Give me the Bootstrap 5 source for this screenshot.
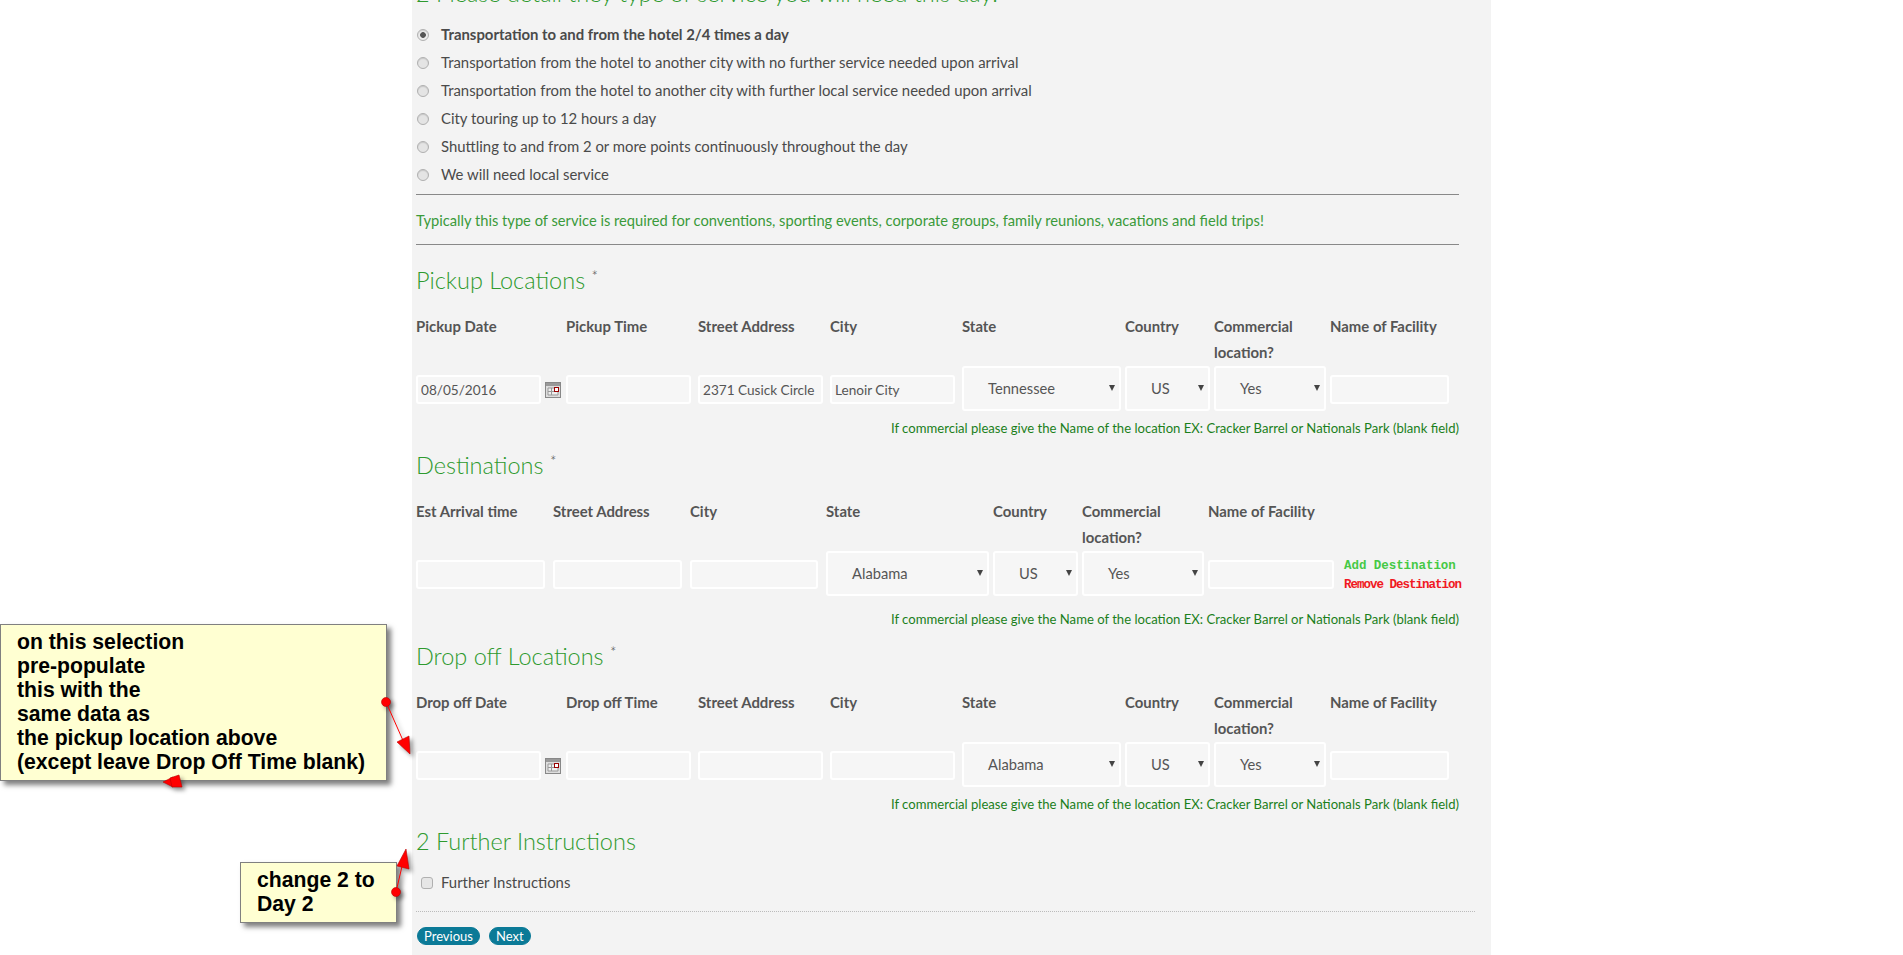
<!DOCTYPE html>
<html lang="en">

<head>
    <meta charset="UTF-8">
    <title>Day 2 Service Details</title>
    <link href="https://cdn.jsdelivr.net/npm/bootstrap@5.3.0/dist/css/bootstrap.min.css" rel="stylesheet">
    <style>
        html, body {
            height: 955px;
            overflow: hidden;
        }

        body {
            background-color: #fff;
            color: #4a4a4a;
            font-family: 'Lato', 'Liberation Sans', sans-serif;
            font-size: 14.9px;
            position: relative;
        }

        .form-panel {
            width: 1079px;
            height: 955px;
            margin-left: 412px;
            padding-left: 4px;
            background-color: #f3f3f3;
            overflow: hidden;
        }

        .sec-title {
            color: #2e9a2e;
            font-family: 'Lato', sans-serif;
            font-weight: 300;
            font-size: 23.5px;
            line-height: 30px;
            margin: 13px 0 19px;
        }

        .sec-title sup {
            color: #444;
            font-size: 15px;
        }

        .top-title {
            margin: -22px 0 12px;
        }

        .pickup-title {
            margin-top: 20px;
        }

        .further-title {
            margin-bottom: 14px;
        }

        .radio-row {
            height: 28px;
            display: flex;
            align-items: center;
            gap: 12px;
        }

        .radio-dot {
            appearance: none;
            flex: none;
            width: 12px;
            height: 12px;
            margin: 2px 0 0 1px;
            border: 1px solid #b0b0b0;
            border-radius: 50%;
            background-color: #e4e4e4;
            box-shadow: inset 0 1px 1px rgba(0, 0, 0, .12);
        }

        .radio-dot:checked {
            background: radial-gradient(circle, #555 0, #555 2.5px, #ececec 3.2px);
        }

        .panel-rule {
            width: 1043px;
            border: 0;
            border-top: 1px solid #888;
            opacity: 1;
            margin: 0;
        }

        .first-rule {
            margin-top: 6px;
        }

        .green-note {
            color: #3a9a3a;
            height: 49px;
            line-height: 50px;
            font-size: 14.7px;
        }

        .loc-grid {
            display: grid;
            align-items: center;
            width: 1043px;
        }

        .cols-a {
            grid-template-columns: 150px 132px 132px 132px 163px 89px 116px 129px;
        }

        .cols-b {
            grid-template-columns: 137px 137px 136px 167px 89px 126px 136px 116px;
        }

        .field-label {
            color: #555;
            font-weight: 700;
            align-self: start;
            line-height: 26px;
            height: 53px;
            margin-top: -1px;
        }

        .field-cell {
            display: flex;
            align-items: center;
            gap: 4px;
            padding-top: 2px;
        }

        .text-box {
            height: 29px;
            width: 100%;
            min-width: 0;
            padding: 2px 3px;
            background-color: #f6f6f6;
            border: 2px solid #fff;
            border-radius: 3px;
            color: #555;
            font-size: 13.6px;
        }

        .date-box {
            width: 125px;
            flex: none;
        }

        .cols-a .field-cell {
            padding-right: 7px;
        }

        .cols-a .date-cell {
            padding-right: 0;
        }

        .cols-a .name-cell, .cols-b .name-cell {
            padding-right: 10px;
        }

        .select-box {
            height: 45px;
            padding: 0 18px 0 24px;
            background-color: #f6f6f6;
            border: 2px solid #fff;
            border-radius: 3px;
            color: #555;
            font-size: 14.7px;
            display: flex;
            align-items: center;
            position: relative;
        }

        .select-box::after {
            content: "";
            position: absolute;
            right: 4px;
            top: 17px;
            border-left: 3px solid transparent;
            border-right: 3px solid transparent;
            border-top: 6px solid #444;
        }

        .cal-icon {
            width: 16px;
            height: 16px;
            flex: none;
        }

        .help-line {
            width: 1043px;
            color: #1b7f1b;
            font-size: 13.1px;
            text-align: right;
            line-height: 18px;
            margin-top: 8px;
        }

        .help-wide {
            margin-top: 14px;
        }

        .dest-links {
            font-family: 'Liberation Mono', monospace;
            font-size: 12.5px;
            font-weight: 700;
            line-height: 19px;
            padding-top: 4px;
            white-space: nowrap;
        }

        .add-link {
            color: #45c945;
            letter-spacing: -.05px;
        }

        .remove-link {
            color: #f01822;
            letter-spacing: -1px;
        }

        .check-row {
            display: flex;
            align-items: center;
            gap: 8px;
            padding-left: 5px;
            height: 24px;
        }

        .check-box {
            appearance: none;
            flex: none;
            width: 12px;
            height: 12px;
            margin: 2px 0 0;
            border: 1px solid #b0b0b0;
            border-radius: 3px;
            background-color: #e6e6e6;
        }

        .dotted-rule {
            width: 1059px;
            border-top: 1px dotted #bbb;
            margin: 17px 0 15px;
        }

        .step-row {
            gap: 9px;
            padding-left: 1px;
        }

        .step-btn {
            --bs-btn-bg: #0b7a97;
            --bs-btn-color: #fff;
            --bs-btn-hover-bg: #0b7a97;
            --bs-btn-hover-color: #fff;
            --bs-btn-border-color: #0b7a97;
            --bs-btn-padding-x: 6px;
            --bs-btn-padding-y: 0;
            --bs-btn-font-size: 13px;
            --bs-btn-border-radius: 9px;
            --bs-btn-line-height: 16px;
        }

        .note-box {
            position: absolute;
            background-color: #ffffd2;
            border: 1px solid #808080;
            box-shadow: 4px 4px 5px rgba(0, 0, 0, .5);
            color: #000;
            font-family: 'Liberation Sans', Arial, sans-serif;
            font-weight: 700;
            font-size: 21.2px;
            line-height: 24px;
            padding: 5px 0 0 16px;
        }

        .note-select {
            left: 0;
            top: 624px;
            width: 387px;
            height: 157px;
        }

        .note-day {
            left: 240px;
            top: 862px;
            width: 157px;
            height: 61px;
        }

        .arrow-layer {
            position: absolute;
            left: 0;
            top: 0;
            pointer-events: none;
        }

        .arrow-shapes {
            filter: drop-shadow(3px 3px 2px rgba(0, 0, 0, .4));
        }
    </style>
</head>

<body>
    <main class="form-panel">
        <h4 class="sec-title top-title">2 Please detail they type of service you will need this day:</h4>

        <!-- Service type -->
        <div class="radio-row fw-bold"><input class="radio-dot" type="radio" name="svc" checked><span>Transportation to and from the hotel 2/4 times a day</span></div>
        <div class="radio-row"><input class="radio-dot" type="radio" name="svc"><span>Transportation from the hotel to another city with no further service needed upon arrival</span></div>
        <div class="radio-row"><input class="radio-dot" type="radio" name="svc"><span>Transportation from the hotel to another city with further local service needed upon arrival</span></div>
        <div class="radio-row"><input class="radio-dot" type="radio" name="svc"><span>City touring up to 12 hours a day</span></div>
        <div class="radio-row"><input class="radio-dot" type="radio" name="svc"><span>Shuttling to and from 2 or more points continuously throughout the day</span></div>
        <div class="radio-row"><input class="radio-dot" type="radio" name="svc"><span>We will need local service</span></div>
        <hr class="panel-rule first-rule">
        <div class="green-note">Typically this type of service is required for conventions, sporting events, corporate groups, family reunions, vacations and field trips!</div>
        <hr class="panel-rule">

        <!-- Pickup -->
        <h4 class="sec-title pickup-title">Pickup Locations <sup>*</sup></h4>
        <div class="loc-grid cols-a">
            <div class="field-label">Pickup Date</div>
            <div class="field-label">Pickup Time</div>
            <div class="field-label">Street Address</div>
            <div class="field-label">City</div>
            <div class="field-label">State</div>
            <div class="field-label">Country</div>
            <div class="field-label">Commercial location?</div>
            <div class="field-label">Name of Facility</div>
            <div class="field-cell date-cell">
                <input class="text-box date-box" type="text" value="08/05/2016">
                <svg class="cal-icon" viewBox="0 0 16 16"><rect x=".5" y=".5" width="15" height="15" fill="#ddd" stroke="#888"/><rect x="1" y="1" width="14" height="3" fill="#999"/><path d="M3 6h10v7H3zM6.500 6v7M3 9.500h10" fill="#eee" stroke="#999"/><rect x="9.500" y="5.500" width="4" height="4" fill="#fff" stroke="#900"/></svg>
            </div>
            <div class="field-cell"><input class="text-box" type="text"></div>
            <div class="field-cell"><input class="text-box" type="text" value="2371 Cusick Circle"></div>
            <div class="field-cell"><input class="text-box" type="text" value="Lenoir City"></div>
            <div class="select-box me-1">Tennessee</div>
            <div class="select-box me-1">US</div>
            <div class="select-box me-1">Yes</div>
            <div class="field-cell name-cell"><input class="text-box" type="text"></div>
        </div>
        <div class="help-line">If commercial please give the Name of the location EX: Cracker Barrel or Nationals Park (blank field)</div>

        <!-- Destinations -->
        <h4 class="sec-title">Destinations <sup>*</sup></h4>
        <div class="loc-grid cols-b">
            <div class="field-label">Est Arrival time</div>
            <div class="field-label">Street Address</div>
            <div class="field-label">City</div>
            <div class="field-label">State</div>
            <div class="field-label">Country</div>
            <div class="field-label">Commercial location?</div>
            <div class="field-label">Name of Facility</div>
            <div class="field-label"></div>
            <div class="field-cell pe-2"><input class="text-box" type="text"></div>
            <div class="field-cell pe-2"><input class="text-box" type="text"></div>
            <div class="field-cell pe-2"><input class="text-box" type="text"></div>
            <div class="select-box me-1">Alabama</div>
            <div class="select-box me-1">US</div>
            <div class="select-box me-1">Yes</div>
            <div class="field-cell name-cell"><input class="text-box" type="text"></div>
            <div class="dest-links">
                <div class="add-link">Add Destination</div>
                <div class="remove-link">Remove Destination</div>
            </div>
        </div>
        <div class="help-line help-wide">If commercial please give the Name of the location EX: Cracker Barrel or Nationals Park (blank field)</div>

        <!-- Drop off -->
        <h4 class="sec-title">Drop off Locations <sup>*</sup></h4>
        <div class="loc-grid cols-a">
            <div class="field-label">Drop off Date</div>
            <div class="field-label">Drop off Time</div>
            <div class="field-label">Street Address</div>
            <div class="field-label">City</div>
            <div class="field-label">State</div>
            <div class="field-label">Country</div>
            <div class="field-label">Commercial location?</div>
            <div class="field-label">Name of Facility</div>
            <div class="field-cell date-cell">
                <input class="text-box date-box" type="text">
                <svg class="cal-icon" viewBox="0 0 16 16"><rect x=".5" y=".5" width="15" height="15" fill="#ddd" stroke="#888"/><rect x="1" y="1" width="14" height="3" fill="#999"/><path d="M3 6h10v7H3zM6.500 6v7M3 9.500h10" fill="#eee" stroke="#999"/><rect x="9.500" y="5.500" width="4" height="4" fill="#fff" stroke="#900"/></svg>
            </div>
            <div class="field-cell"><input class="text-box" type="text"></div>
            <div class="field-cell"><input class="text-box" type="text"></div>
            <div class="field-cell"><input class="text-box" type="text"></div>
            <div class="select-box me-1">Alabama</div>
            <div class="select-box me-1">US</div>
            <div class="select-box me-1">Yes</div>
            <div class="field-cell name-cell"><input class="text-box" type="text"></div>
        </div>
        <div class="help-line">If commercial please give the Name of the location EX: Cracker Barrel or Nationals Park (blank field)</div>

        <!-- Further instructions -->
        <h4 class="sec-title further-title">2 Further Instructions</h4>
        <div class="check-row"><input class="check-box" type="checkbox"><span>Further Instructions</span></div>
        <div class="dotted-rule"></div>
        <div class="d-flex step-row">
            <button class="btn step-btn" type="button">Previous</button>
            <button class="btn step-btn" type="button">Next</button>
        </div>
    </main>

    <!-- Screenshot annotations -->
    <div class="note-box note-select">on this selection<br>pre-populate<br>this with the<br>same data as<br>the pickup location above<br>(except leave Drop Off Time blank)</div>
    <div class="note-box note-day">change 2 to<br>Day 2</div>
    <svg class="arrow-layer" width="1903" height="955" viewBox="0 0 1903 955">
        <g class="arrow-shapes" fill="#f00" stroke="#b00" stroke-width=".6">
            <line x1="386" y1="702" x2="405" y2="745" stroke="#f00" stroke-width="1"/>
            <circle cx="386" cy="702" r="4.500"/>
            <polygon points="410,754 397,742 409,736"/>
            <line x1="396" y1="892" x2="403" y2="862" stroke="#f00" stroke-width="1"/>
            <circle cx="396" cy="892" r="4.500"/>
            <polygon points="406,849 397,866 409,869"/>
            <polygon points="163,782 173,777 173,787"/>
            <polygon points="170,778 179,775 182,787 172,787"/>
        </g>
    </svg>
</body>

</html>
